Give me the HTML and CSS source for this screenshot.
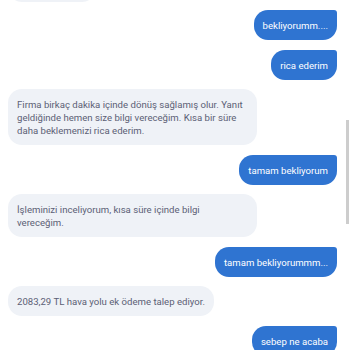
FILE: index.html
```html
<!DOCTYPE html>
<html lang="tr">
<head>
    <meta charset="UTF-8">
    <meta name="viewport" content="width=device-width, initial-scale=1.0">
    <title>Canlı Destek</title>
    <link rel="stylesheet" href="styles.css">
</head>
<body>
    <div class="chat">
        <div class="msg agent prev"></div>
        <div class="msg user">bekliyorumm....</div>
        <div class="msg user">rica ederim</div>
        <div class="msg agent">Firma birkaç dakika içinde dönüş sağlamış olur. Yanıt geldiğinde hemen size bilgi vereceğim. Kısa bir süre daha beklemenizi rica ederim.</div>
        <div class="msg user">tamam bekliyorum</div>
        <div class="msg agent">İşleminizi inceliyorum, kısa süre içinde bilgi vereceğim.</div>
        <div class="msg user">tamam bekliyorummm...</div>
        <div class="msg agent">2083,29 TL hava yolu ek ödeme talep ediyor.</div>
        <div class="msg user">sebep ne acaba</div>
    </div>
    <div class="scroll-thumb"></div>
</body>
</html>
```

FILE: styles.css
```css
body {
    margin: 0;
    padding: 0;
    background-color: #fff;
    font-family: Roboto, "Noto Sans", Arial, sans-serif;
    height: 350px;
    overflow: hidden;
}

.chat {
    display: flex;
    flex-direction: column;
    gap: 9.5px;
    padding: 0 13px 0 8px;
    margin-top: -28px;
}

.msg {
    font-size: 9.6px;
    line-height: 13px;
    padding: 9px 9px 8px 9px;
    max-width: 231px;
}

.agent {
    align-self: flex-start;
    background-color: #eff2f7;
    color: #5b6075;
    border-radius: 14px;
}

.prev {
    width: 70px;
    height: 13px;
    margin-bottom: -1.5px;
}

.user {
    align-self: flex-end;
    background-color: #2f74d1;
    color: #fff;
    border-radius: 14px 3px 14px 14px;
}

.scroll-thumb {
    position: absolute;
    top: 120px;
    left: 346px;
    width: 3px;
    height: 104px;
    background-color: #cdcdcd;
}
```
